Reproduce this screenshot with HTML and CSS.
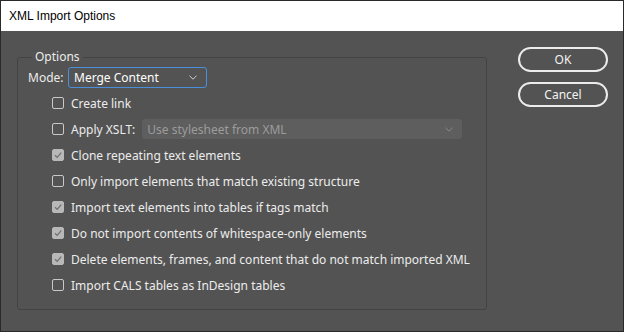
FILE: index.html
```html
<!DOCTYPE html>
<html lang="en">
<head>
    <meta charset="UTF-8">
    <title>XML Import Options</title>
    <link rel="stylesheet" href="styles.css">
</head>
<body>
    <div class="window">
        <div class="titlebar">XML Import Options</div>
        <div class="dialog">
            <fieldset class="group">
                <legend>Options</legend>
                <div class="mode-row">
                    <label class="mode-label">Mode:</label>
                    <div class="select select-focus">
                        <span>Merge Content</span>
                        <svg class="chevron" width="8" height="5" viewBox="0 0 8 5"><polyline points="0.5,0.8 4,4.2 7.5,0.8" fill="none" stroke="#d0d0d0" stroke-width="1"/></svg>
                    </div>
                </div>
                <div class="row"><span class="box"></span>Create link</div>
                <div class="row">
                    <span class="box"></span>Apply XSLT:
                    <div class="select select-disabled">
                        <span>Use stylesheet from XML</span>
                        <svg class="chevron" width="8" height="5" viewBox="0 0 8 5"><polyline points="0.5,0.8 4,4.2 7.5,0.8" fill="none" stroke="#8a8a8a" stroke-width="1"/></svg>
                    </div>
                </div>
                <div class="row"><span class="box checked"><svg width="10" height="10" viewBox="0 0 10 10"><polyline points="2,5.2 4.2,7.4 8.2,2.6" fill="none" stroke="#707070" stroke-width="1.3"/></svg></span>Clone repeating text elements</div>
                <div class="row"><span class="box"></span>Only import elements that match existing structure</div>
                <div class="row"><span class="box checked"><svg width="10" height="10" viewBox="0 0 10 10"><polyline points="2,5.2 4.2,7.4 8.2,2.6" fill="none" stroke="#707070" stroke-width="1.3"/></svg></span>Import text elements into tables if tags match</div>
                <div class="row"><span class="box checked"><svg width="10" height="10" viewBox="0 0 10 10"><polyline points="2,5.2 4.2,7.4 8.2,2.6" fill="none" stroke="#707070" stroke-width="1.3"/></svg></span>Do not import contents of whitespace-only elements</div>
                <div class="row"><span class="box checked"><svg width="10" height="10" viewBox="0 0 10 10"><polyline points="2,5.2 4.2,7.4 8.2,2.6" fill="none" stroke="#707070" stroke-width="1.3"/></svg></span>Delete elements, frames, and content that do not match imported XML</div>
                <div class="row"><span class="box"></span>Import CALS tables as InDesign tables</div>
            </fieldset>
            <div class="buttons">
                <button class="button">OK</button>
                <button class="button">Cancel</button>
            </div>
        </div>
    </div>
</body>
</html>
```

FILE: styles.css
```css
body {
    margin: 0;
    font-family: "Noto Sans", "Liberation Sans", Arial, sans-serif;
    font-size: 12px;
}
.window {
    width: 624px;
    height: 332px;
    box-sizing: border-box;
    border: 1px solid #2a2a2a;
    background: #535353;
    color: #ececec;
}
.titlebar {
    height: 30px;
    line-height: 30px;
    padding-left: 8px;
    background: #fff;
    color: #000;
    font-family: "Liberation Sans", Arial, sans-serif;
    font-size: 12px;
}
.dialog {
    display: flex;
    align-items: flex-start;
    padding: 16px 0 0 16px;
}
.group {
    width: 470px;
    box-sizing: border-box;
    margin: 2px 0 0 0;
    padding: 2px 10px 11px 10px;
    border: 1px solid #434343;
    border-radius: 3px;
}
.group legend {
    margin-left: 4px;
    padding: 0 3px;
    line-height: 16px;
}
.mode-row {
    display: flex;
    align-items: center;
    height: 21px;
    margin-bottom: 2px;
}
.mode-label {
    width: 40px;
}
.select {
    display: flex;
    align-items: center;
    justify-content: space-between;
    box-sizing: border-box;
    border-radius: 3px;
    padding: 0 9px 0 5px;
}
.select-focus {
    width: 139px;
    height: 21px;
    border: 1px solid #4a8fdb;
    color: #fff;
}
.select-disabled {
    width: 320px;
    height: 20px;
    margin-left: 7px;
    background: #5e5e5e;
    color: #9c9c9c;
}
.row {
    display: flex;
    align-items: center;
    height: 26px;
    padding-left: 24px;
}
.box {
    width: 12px;
    height: 12px;
    box-sizing: border-box;
    border: 1px solid #c8c8c8;
    border-radius: 2px;
    margin-right: 7px;
    display: flex;
    align-items: center;
    justify-content: center;
}
.box.checked {
    background: #b8b8b8;
    border-color: #b8b8b8;
}
.buttons {
    display: flex;
    flex-direction: column;
    gap: 10px;
    margin-left: 31px;
}
.button {
    width: 90px;
    height: 25px;
    border: 2px solid #ececec;
    border-radius: 13px;
    background: transparent;
    color: #f2f2f2;
    font-family: "Noto Sans", "Liberation Sans", Arial, sans-serif;
    font-size: 12px;
    padding: 0;
}
```
